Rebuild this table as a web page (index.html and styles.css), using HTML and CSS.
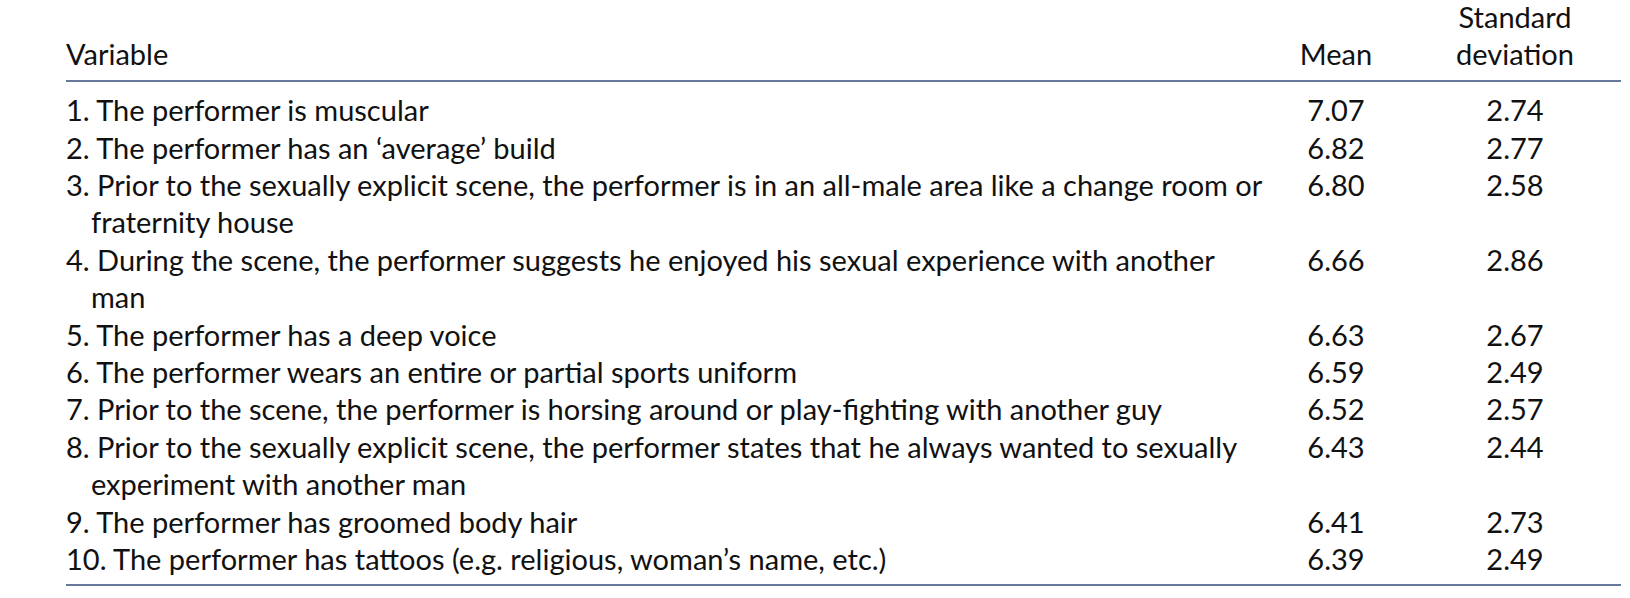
FILE: index.html
```html
<!DOCTYPE html>
<html lang="en">
<head>
<meta charset="utf-8">
<title>Table</title>
<link rel="stylesheet" href="styles.css">
</head>
<body>
<table class="data">
  <colgroup>
    <col class="c-var">
    <col class="c-mean">
    <col class="c-sd">
  </colgroup>
  <thead>
    <tr>
      <th class="var">Variable</th>
      <th class="num mean">Mean</th>
      <th class="num sd">Standard<br>deviation</th>
    </tr>
  </thead>
  <tbody>
    <tr class="first"><td class="var">1. The performer is muscular</td><td class="num mean">7.07</td><td class="num sd">2.74</td></tr>
    <tr><td class="var">2. The performer has an ‘average’ build</td><td class="num mean">6.82</td><td class="num sd">2.77</td></tr>
    <tr><td class="var">3. Prior to the sexually explicit scene, the performer is in an all-male area like a change room or fraternity house</td><td class="num mean">6.80</td><td class="num sd">2.58</td></tr>
    <tr><td class="var">4. During the scene, the performer suggests he enjoyed his sexual experience with another man</td><td class="num mean">6.66</td><td class="num sd">2.86</td></tr>
    <tr><td class="var">5. The performer has a deep voice</td><td class="num mean">6.63</td><td class="num sd">2.67</td></tr>
    <tr><td class="var">6. The performer wears an entire or partial sports uniform</td><td class="num mean">6.59</td><td class="num sd">2.49</td></tr>
    <tr><td class="var">7. Prior to the scene, the performer is horsing around or play-fighting with another guy</td><td class="num mean">6.52</td><td class="num sd">2.57</td></tr>
    <tr><td class="var">8. Prior to the sexually explicit scene, the performer states that he always wanted to sexually experiment with another man</td><td class="num mean">6.43</td><td class="num sd">2.44</td></tr>
    <tr><td class="var">9. The performer has groomed body hair</td><td class="num mean">6.41</td><td class="num sd">2.73</td></tr>
    <tr class="last"><td class="var">10. The performer has tattoos (e.g. religious, woman’s name, etc.)</td><td class="num mean">6.39</td><td class="num sd">2.49</td></tr>
  </tbody>
</table>
</body>
</html>
```
FILE: styles.css
```css
html, body {
  margin: 0;
  padding: 0;
  background: #ffffff;
}

.data {
  margin: -2px 0 0 66px;
  width: 1555px;
  table-layout: fixed;
  border-collapse: collapse;
  font-family: Lato, "Open Sans", sans-serif;
  font-size: 29px;
  line-height: 37.4px;
  color: #111111;
}

.c-var { width: 1204px; }
.c-mean { width: 132px; }
.c-sd { width: 219px; }

.data th,
.data td {
  padding: 0;
  font-weight: normal;
  vertical-align: top;
}

.data th {
  vertical-align: bottom;
  padding-bottom: 7px;
  border-bottom: 2px solid #66799a;
}

.var {
  text-align: left;
  padding-left: 25px !important;
  text-indent: -25px;
}

.num {
  text-align: center;
}

.sd {
  padding-left: 7px !important;
}

.first td {
  padding-top: 9.3px;
}

.last td {
  padding-bottom: 6.5px;
  border-bottom: 2px solid #66799a;
}
```
